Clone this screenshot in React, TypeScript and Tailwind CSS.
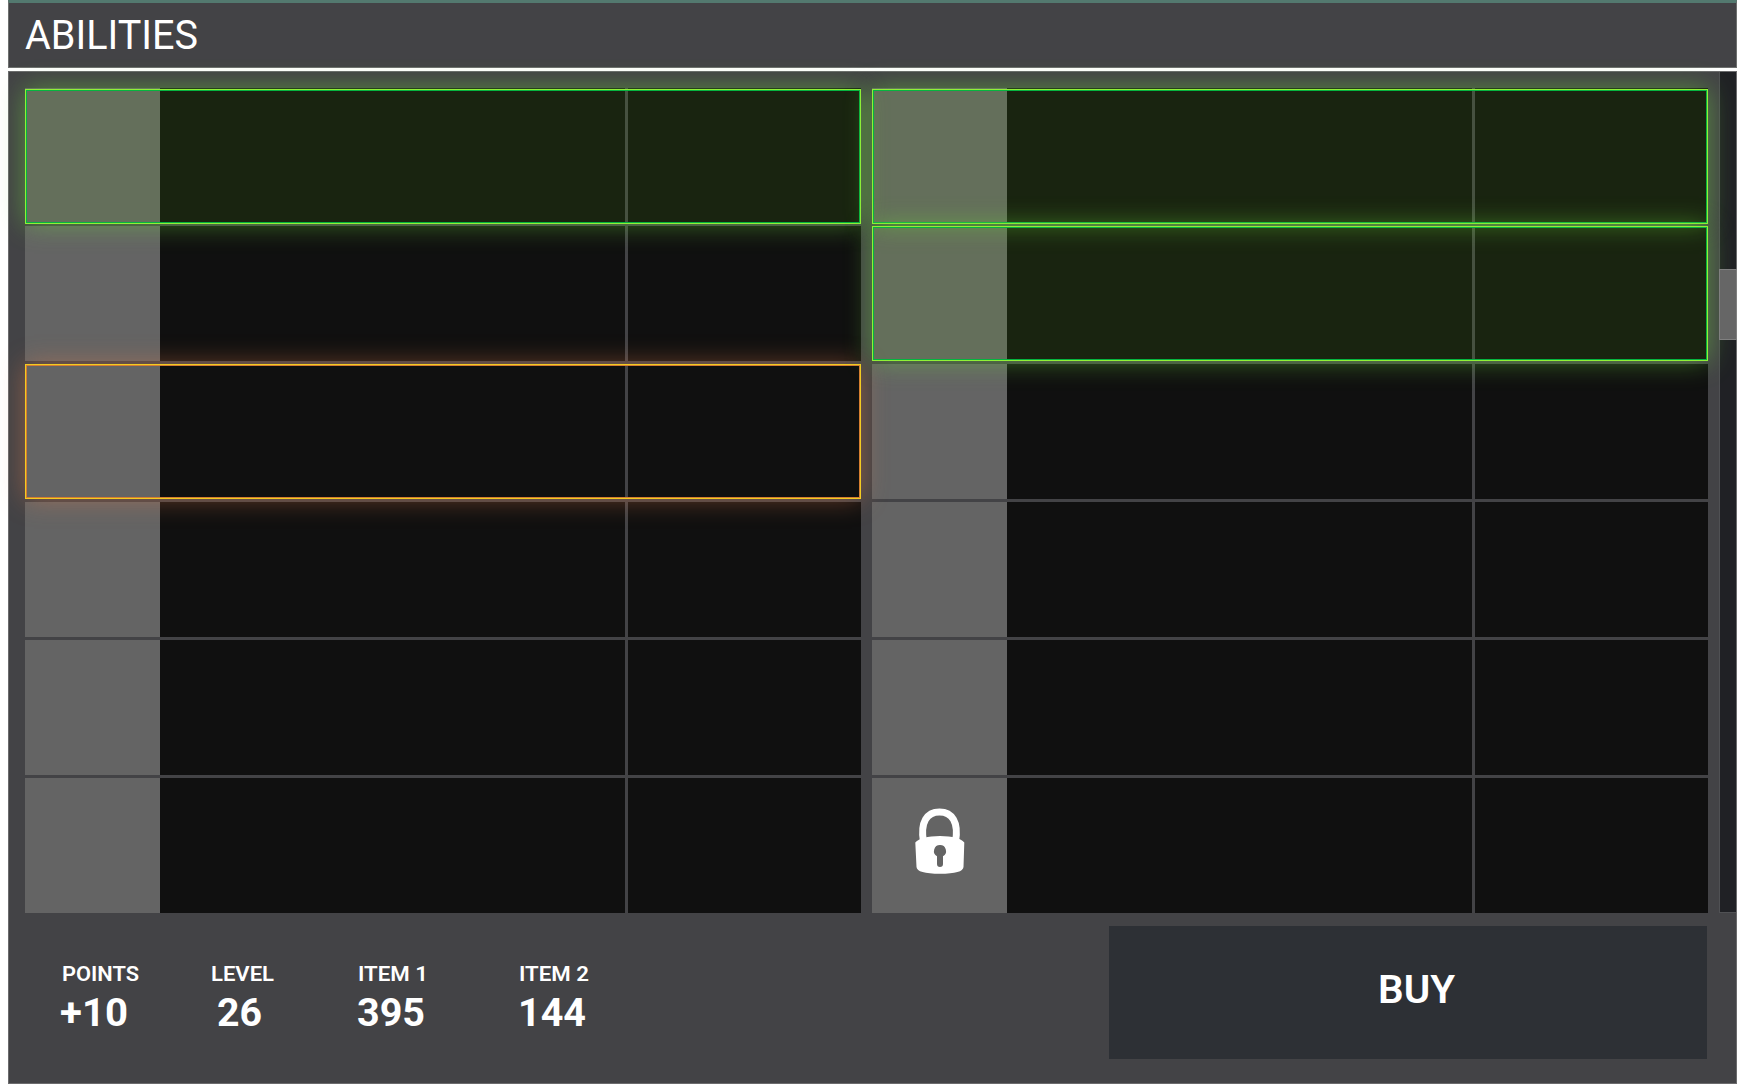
type Highlight = "owned" | "selected" | undefined;

interface Ability {
  highlight?: Highlight;
  shifted?: boolean;
  locked?: boolean;
}

const leftColumn: Ability[] = [
  { highlight: "owned", shifted: true },
  {},
  { highlight: "selected" },
  {},
  {},
  {},
];

const rightColumn: Ability[] = [
  { highlight: "owned", shifted: true },
  { highlight: "owned" },
  {},
  {},
  {},
  { locked: true },
];

const stats = [
  { label: "POINTS", value: "+10", cell: "w-[149px]", labelW: 76, valueW: 66, indent: "ml-[-2px]" },
  { label: "LEVEL", value: "26", cell: "w-[147px]", labelW: 62, valueW: 43, indent: "ml-[6px]" },
  { label: "ITEM 1", value: "395", cell: "w-[161px]", labelW: 69, valueW: 66, indent: "ml-[-1px]" },
  { label: "ITEM 2", value: "144", cell: "w-[100px]", labelW: 69, valueW: 66, indent: "ml-[-1px]" },
];

/* A line of text fitted to an exact width, whatever the font's own advance is. */
function Fit({ text, width, size, weight }: { text: string; width: number; size: number; weight: number }) {
  return (
    <svg width={width} height={size} className="block overflow-visible">
      <text
        x={0}
        y={size * 0.855}
        textLength={width}
        lengthAdjust="spacingAndGlyphs"
        fontSize={size}
        fontWeight={weight}
        fill="white"
      >
        {text}
      </text>
    </svg>
  );
}

function LockIcon() {
  return (
    <svg width="50" height="66" viewBox="0 0 50 66" fill="none" className="mb-[9px]">
      <path d="M8.5 34C5 14 12 4 24.5 4S44 14 40.500 34" stroke="white" strokeWidth="7" />
      <path
        fillRule="evenodd"
        fill="white"
        d="M.3 34.500Q6 28 25 28T49.300 34.500L48.500 59Q48 65.800 25 65.800T1.500 59ZM25 37A6 6 0 0 0 22 48.200V56A3 3 0 0 0 28 56V48.200A6 6 0 0 0 25 37Z"
      />
    </svg>
  );
}

function Row({ highlight, shifted, locked }: Ability) {
  return (
    <div className="relative flex h-[135px]">
      <div className="flex w-[135px] items-center justify-center bg-[#646464]">{locked && <LockIcon />}</div>
      <div className="w-[465px] bg-[#101010]" />
      <div className="ml-[3px] w-[233px] bg-[#101010]" />
      {highlight === "owned" && (
        <div
          className={`absolute inset-x-0 z-10 h-[135px] border border-[#90f037] bg-[#68cb10]/11 shadow-[0_0_25px_rgba(110,220,60,0.48),inset_0_0_0_1px_#06b440] ${shifted ? "top-px" : "top-0"}`}
        />
      )}
      {highlight === "selected" && (
        <div className="absolute inset-0 z-10 border border-[#f2cc22] shadow-[0_0_25px_rgba(235,125,75,0.43),inset_0_0_0_1px_#d67d30]" />
      )}
    </div>
  );
}

function Column({ rows }: { rows: Ability[] }) {
  return (
    <div className="flex w-[836px] flex-col gap-[3px]">
      {rows.map((row, i) => (
        <Row key={i} {...row} />
      ))}
    </div>
  );
}

export default function App() {
  return (
    <div className="h-[1084px] w-[1738px] overflow-hidden bg-white pl-2 font-['Roboto',sans-serif] text-white">
      <header className="flex h-[68px] w-[1729px] border border-t-3 border-[#6e706f] border-t-[#53796f] bg-[#434346] pt-[12px] pl-[16px]">
        <Fit text="ABILITIES" width={173} size={40} weight={400} />
      </header>
      <main className="mt-[3px] h-[1013px] w-[1729px] border border-[#6b6b6d] bg-[#434346]">
        <div className="flex h-[841px] pl-4">
          <div className="flex gap-[11px] pt-4">
            <Column rows={leftColumn} />
            <Column rows={rightColumn} />
          </div>
          <div className="relative ml-[11px] h-[841px] w-[17px] border-b border-l border-[#505154] bg-[#202125]">
            <div className="absolute top-[197px] left-[-1px] z-20 h-[71px] w-[18px] border border-[#808080] bg-[#666666]" />
          </div>
        </div>
        <footer className="flex h-[170px] pl-[53px]">
          <div className="flex w-[1047px] pt-[50px]">
            {stats.map((s) => (
              <div key={s.label} className={s.cell}>
                <Fit text={s.label} width={s.labelW + 1} size={21} weight={600} />
                <div className={`mt-2 ${s.indent}`}>
                  <Fit text={s.value} width={s.valueW + 2} size={39.500} weight={700} />
                </div>
              </div>
            ))}
          </div>
          <button className="mt-[13px] flex h-[133px] w-[598px] items-center justify-center bg-[#2d3035]">
            <span className="mt-[-8px] ml-4">
              <Fit text="BUY" width={77} size={39.500} weight={600} />
            </span>
          </button>
        </footer>
      </main>
    </div>
  );
}
